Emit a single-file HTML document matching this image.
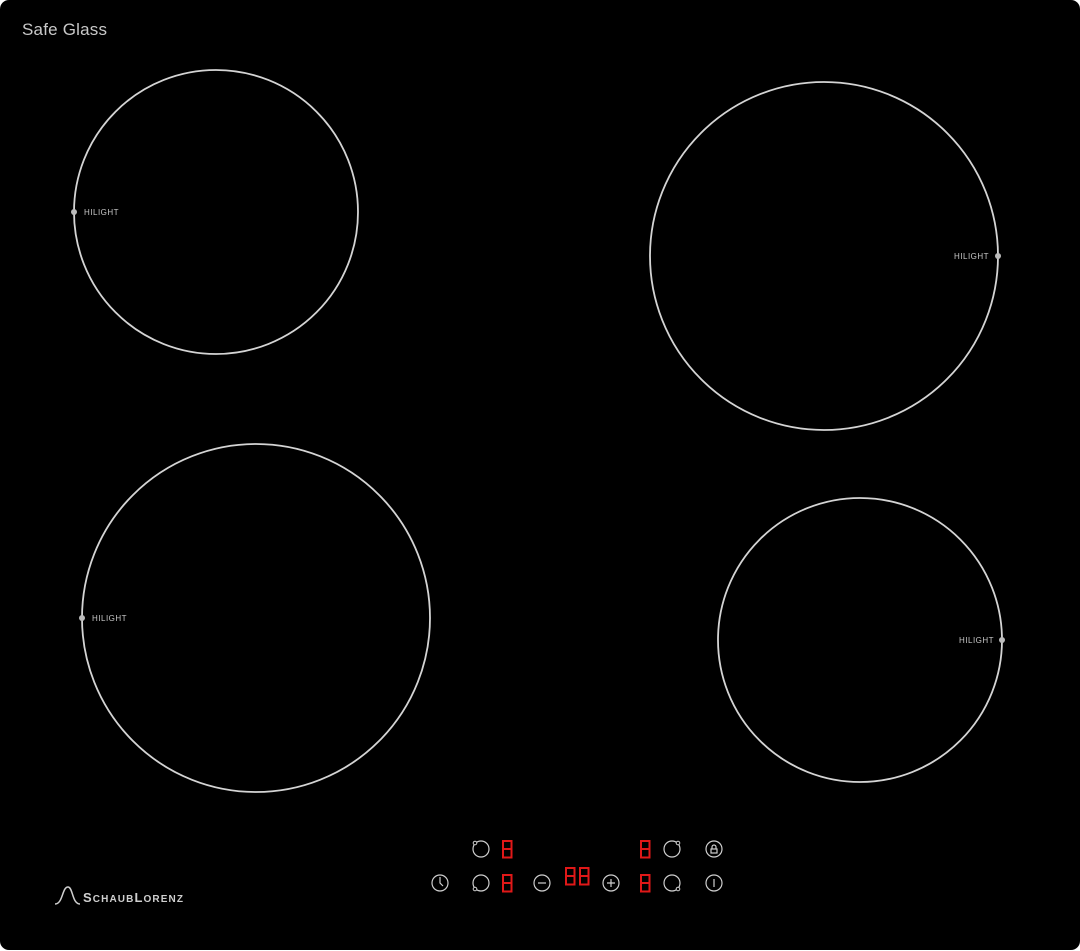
<!DOCTYPE html>
<html><head><meta charset="utf-8"><style>
html,body{margin:0;padding:0;background:#fff;width:1080px;height:951px;overflow:hidden}
svg{display:block}
text{font-family:"Liberation Sans",sans-serif}
</style></head><body>
<svg width="1080" height="951" viewBox="0 0 1080 951" xmlns="http://www.w3.org/2000/svg">
<defs>
<g id="d"><rect x="1" y="1" width="8.5" height="8" fill="none" stroke="#e01818" stroke-width="2"/><rect x="1" y="9" width="8.5" height="8.5" fill="none" stroke="#e01818" stroke-width="2"/></g>
</defs>
<rect x="0" y="0" width="1080" height="950" rx="9" fill="#000"/>
<text x="22" y="35" font-size="17" fill="#c8c8c8" letter-spacing="0.2">Safe Glass</text>
<g fill="none" stroke="#d4d4d4" stroke-width="1.8">
<circle cx="216" cy="212" r="142"/>
<circle cx="824" cy="256" r="174"/>
<circle cx="256" cy="618" r="174"/>
<circle cx="860" cy="640" r="142"/>
</g>
<g fill="#bbb">
<circle cx="74" cy="212" r="3"/>
<circle cx="998" cy="256" r="3"/>
<circle cx="82" cy="618" r="3"/>
<circle cx="1002" cy="640" r="3"/>
</g>
<g font-size="8" fill="#c8c8c8" letter-spacing="0.5">
<text x="84" y="215">HILIGHT</text>
<text x="954" y="259">HILIGHT</text>
<text x="92" y="621">HILIGHT</text>
<text x="959" y="643">HILIGHT</text>
</g>
<g fill="none" stroke="#cfcfcf" stroke-width="1.2">
<circle cx="481" cy="849" r="8"/>
<circle cx="481" cy="883" r="8"/>
<circle cx="440" cy="883" r="8"/>
<circle cx="542" cy="883" r="8"/>
<circle cx="611" cy="883" r="8"/>
<circle cx="672" cy="849" r="8"/>
<circle cx="672" cy="883" r="8"/>
<circle cx="714" cy="849" r="8"/>
<circle cx="714" cy="883" r="8"/>
<path d="M440 877v6l3 3"/>
<path d="M538 883h8"/>
<path d="M607 883h8M611 879v8"/>
<path d="M714 879v8"/>
<rect x="711" y="849" width="6" height="4"/>
<path d="M712 849v-2a2 2 0 0 1 4 0v2"/>
</g>
<g fill="#000" stroke="#cfcfcf" stroke-width="1">
<circle cx="475" cy="843" r="1.8"/>
<circle cx="475" cy="889" r="1.8"/>
<circle cx="678" cy="843" r="1.8"/>
<circle cx="678" cy="889" r="1.8"/>
</g>
<use href="#d" x="502" y="840"/>
<use href="#d" x="502" y="874"/>
<use href="#d" x="565" y="867"/>
<use href="#d" x="579" y="867"/>
<use href="#d" x="640" y="840"/>
<use href="#d" x="640" y="874"/>
<path d="M55 904c8 0 7-17 13-17c5 0 4 17 12 17" fill="none" stroke="#cfcfcf" stroke-width="1.5"/>
<text x="83" y="902" font-size="13" fill="#cfcfcf" font-weight="bold" textLength="100" lengthAdjust="spacing">S<tspan font-size="10">CHAUB</tspan>L<tspan font-size="10">ORENZ</tspan></text>
</svg>
</body></html>
